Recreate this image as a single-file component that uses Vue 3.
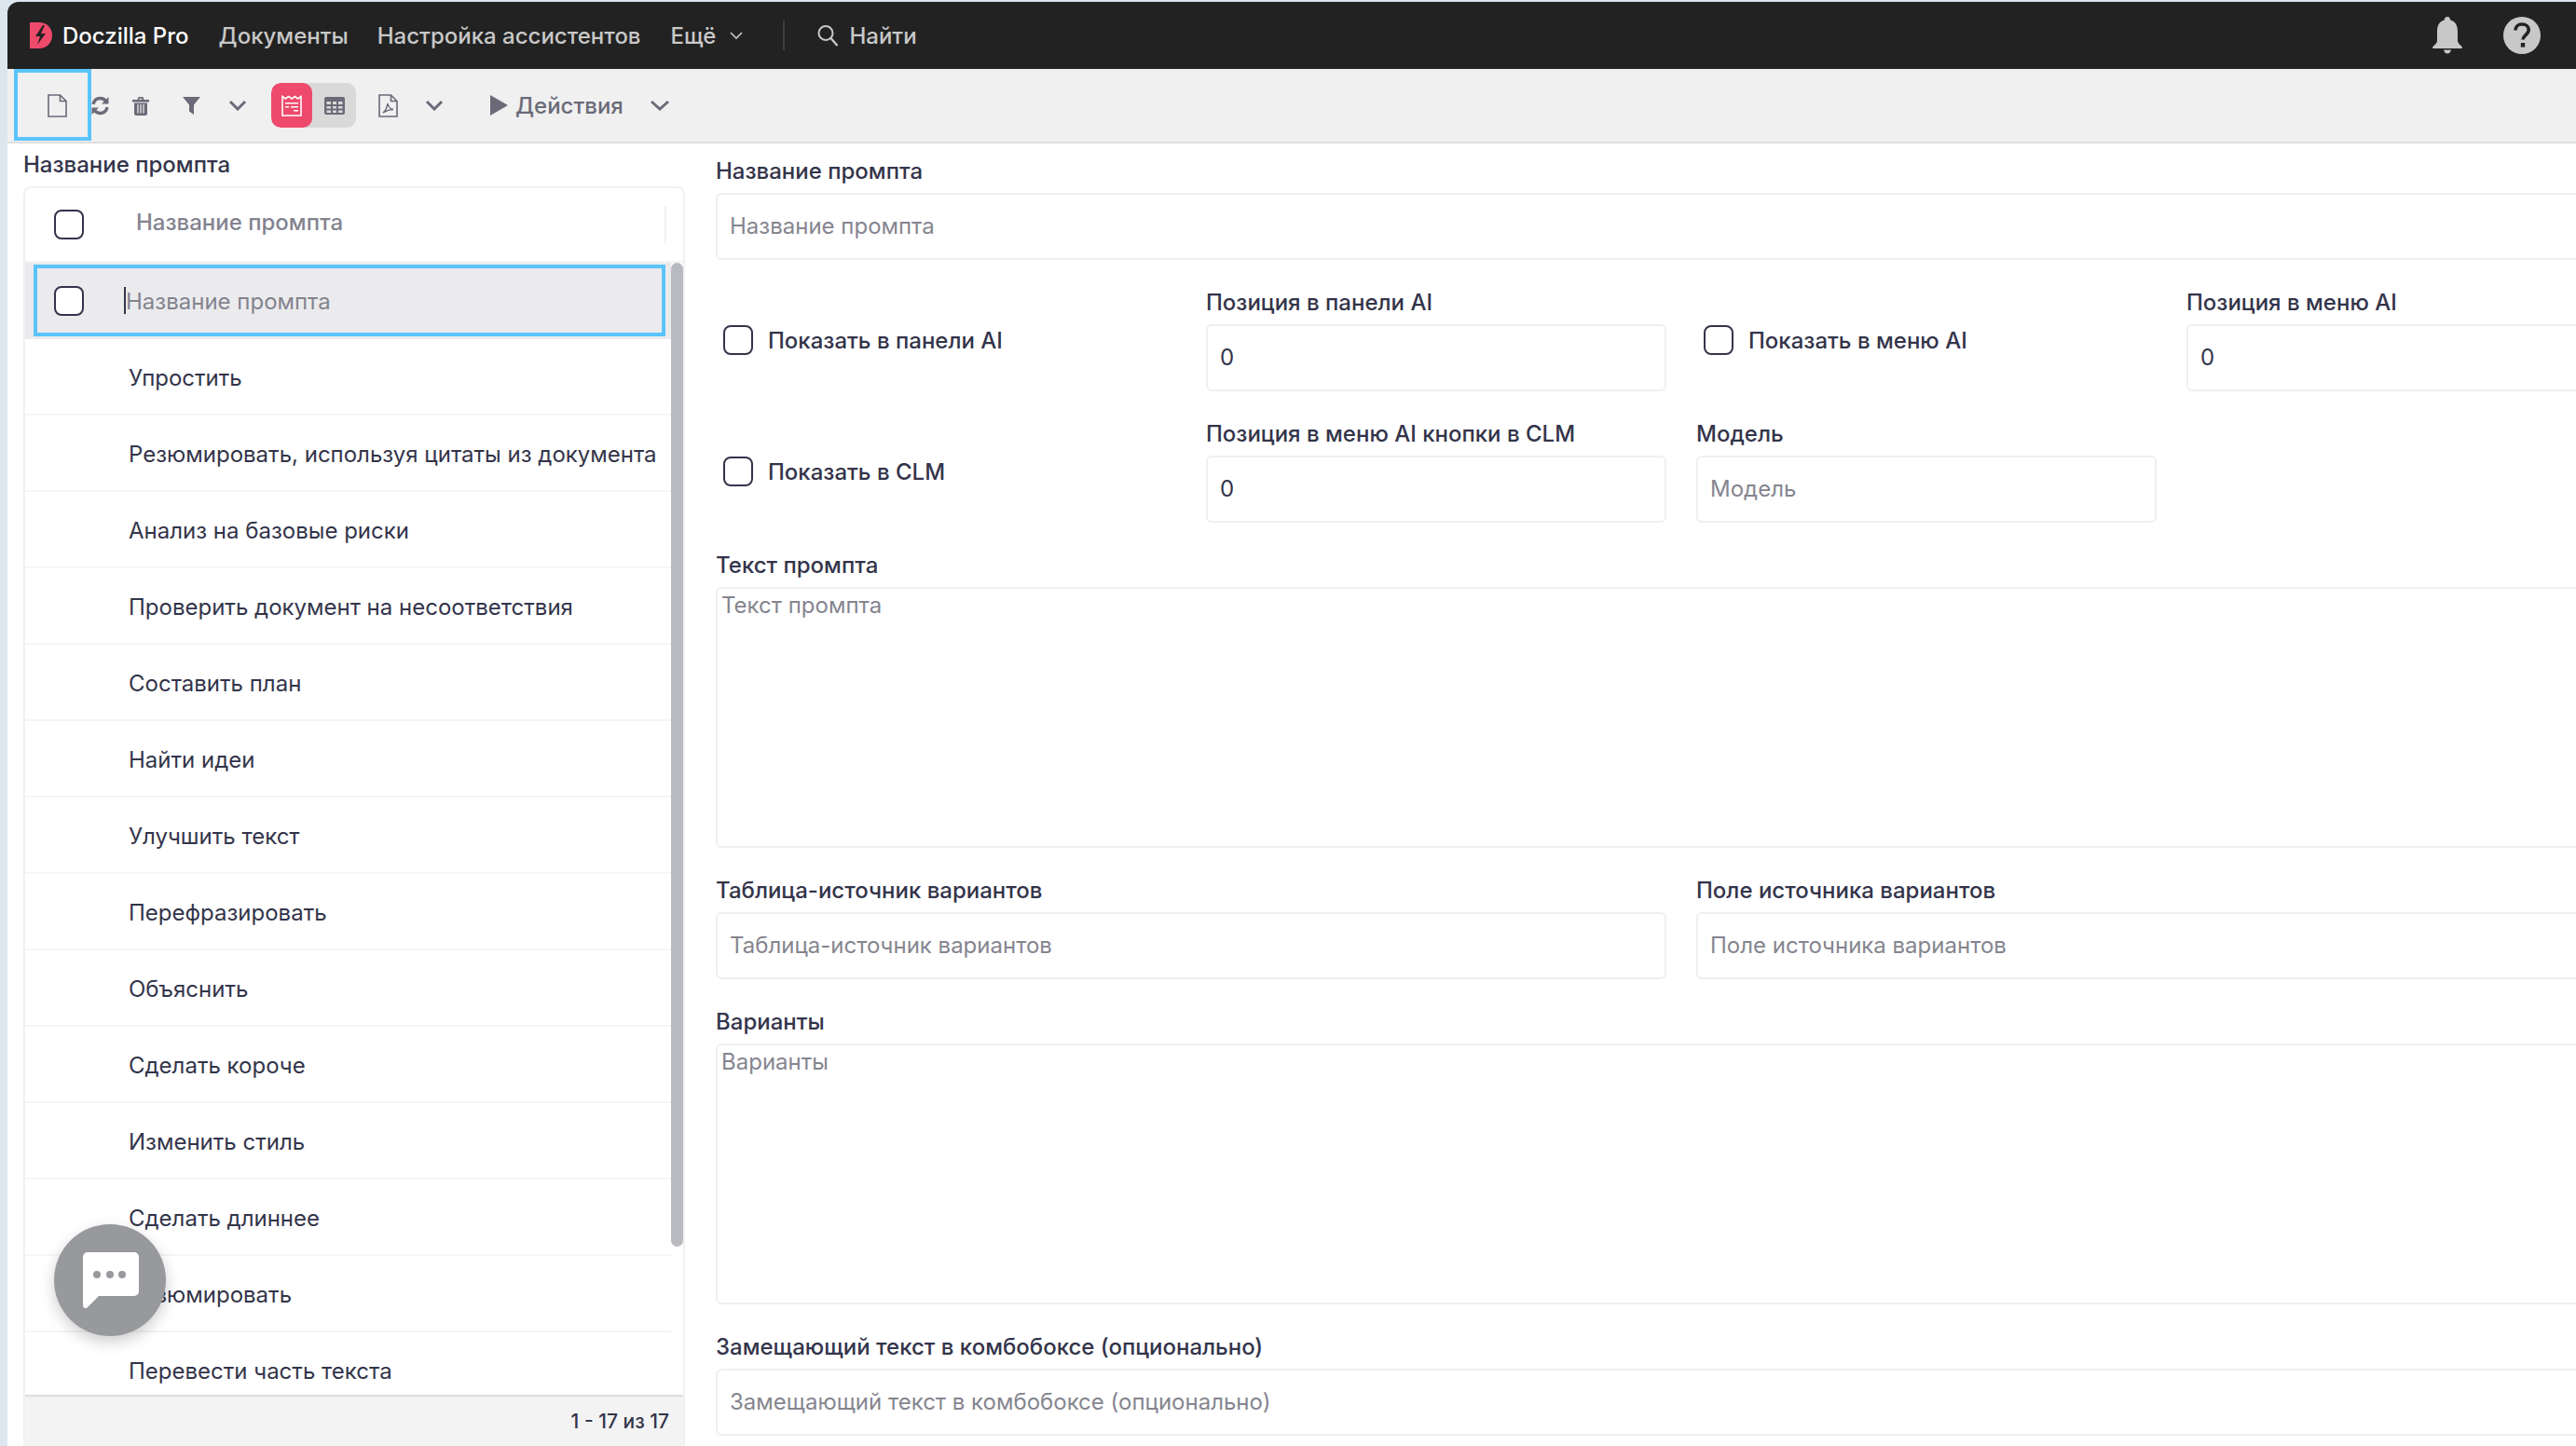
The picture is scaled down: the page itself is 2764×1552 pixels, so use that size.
<template>
  <div class="page">
    <header class="topbar">
      <svg class="logo" viewBox="0 0 24 28">
        <path d="M0 0h10c8 0 14 6 14 14s-6 14-14 14H0z" fill="#ee4a6c" />
        <path d="M14 3 6 15h5l-3 9 9-12h-5l4-9z" fill="#222" />
      </svg>
      <span class="brand">Doczilla Pro</span>
      <nav class="nav">
        <a>Документы</a>
        <a>Настройка ассистентов</a>
        <a class="more">
          Ещё
          <svg width="14" height="10" viewBox="0 0 14 10"><path d="M1 2l6 6 6-6" fill="none" stroke="#c8c8c8" stroke-width="1.6" /></svg>
        </a>
      </nav>
      <div class="divider"></div>
      <div class="search">
        <svg width="26" height="26" viewBox="0 0 26 26"><circle cx="11" cy="10.5" r="7.5" fill="none" stroke="#c8c8c8" stroke-width="2" /><path d="M16.5 16l7 8" stroke="#c8c8c8" stroke-width="2.4" /></svg>
        <span>Найти</span>
      </div>
      <div class="top-right">
        <svg class="bell" width="32" height="40" viewBox="0 0 32 40">
          <path d="M16 0c2 0 3.2 1.6 3.2 3.6C25 5.300 27 10 27 16v10c0 2 2.500 4 4.500 6 .8 1 .3 2-1 2H1.500c-1.300 0-1.800-1-1-2 2-2 4.500-4 4.500-6V16c0-6 2-10.700 7.800-12.400C12.800 1.600 14 0 16 0z" fill="#c8c8c8" />
          <path d="M12 35.500h8c-.6 2.500-2 4-4 4s-3.400-1.500-4-4z" fill="#c8c8c8" />
        </svg>
        <svg width="40" height="40" viewBox="0 0 40 40">
          <circle cx="20" cy="20" r="20" fill="#c8c8c8" />
          <path d="M13 14.500c0-4 3-6.500 7-6.500s7.200 2.400 7.200 6c0 5.500-6.200 5.500-6.200 10.500" fill="none" stroke="#222" stroke-width="3.600" />
          <rect x="18.800" y="28" width="4.400" height="4.600" fill="#222" />
        </svg>
      </div>
    </header>

    <div class="toolbar">
      <div class="focus-box">
        <svg width="21" height="25" viewBox="0 0 21 25"><path d="M1 1h12.500L20 7.500V24H1z M13.500 1v6.500H20" fill="none" stroke="#6a6a78" stroke-width="1.600" /></svg>
      </div>
      <svg class="t-refresh" width="19" height="21" viewBox="0 0 19 21">
        <path d="M2 9c.8-4 3.800-6.500 7.500-6.500 2.500 0 4.500 1.100 6 2.800" fill="none" stroke="#6a6a78" stroke-width="3.400" />
        <path d="M18.500 1v7.500H11z" fill="#6a6a78" />
        <path d="M17 12c-.8 4-3.800 6.500-7.500 6.500-2.500 0-4.500-1.100-6-2.800" fill="none" stroke="#6a6a78" stroke-width="3.400" />
        <path d="M.5 20v-7.500H8z" fill="#6a6a78" />
      </svg>
      <svg class="t-trash" width="18" height="21" viewBox="0 0 18 21">
        <path d="M0 4h18v2.500H0zM5.500 4l1-3h5l1 3h-2l-.5-1.300h-2.500L7.500 4z" fill="#6a6a78" />
        <path d="M2 7.500h14V19a2 2 0 0 1-2 2H4a2 2 0 0 1-2-2z" fill="#6a6a78" />
        <path d="M6 9v9.500M9 9v9.500M12 9v9.500" stroke="#f0f0f0" stroke-width="1.200" />
      </svg>
      <svg class="t-filter" width="19" height="19" viewBox="0 0 19 19"><path d="M0 0h19l-7 8.500V19l-5-3.500v-7z" fill="#6a6a78" /></svg>
      <svg class="t-chev" width="20" height="12" viewBox="0 0 20 12"><path d="M2 2l8 8 8-8" fill="none" stroke="#6a6a78" stroke-width="3" /></svg>
      <div class="segment">
        <div class="seg-on">
          <svg width="22" height="23" viewBox="0 0 22 23">
            <path d="M1 1.500l3.300 2.500 3.300-2.500L11 4l3.400-2.500L17.700 4 21 1.500V22H1z" fill="none" stroke="#fff" stroke-width="1.600" />
            <path d="M4 8h14v1.500H4zM4 12h4v1.500H4zM10 12h8v1.500h-8zM13 16h5v1.500h-5z" fill="#fff" />
          </svg>
        </div>
        <div class="seg-off">
          <svg width="22" height="19" viewBox="0 0 22 19"><path d="M2 0h18a2 2 0 0 1 2 2v15a2 2 0 0 1-2 2H2a2 2 0 0 1-2-2V2a2 2 0 0 1 2-2zm.5 5v3h4.500V5zm6.500 0v3h4V5zm6 0v3h4.500V5zM2.500 10v2.500h4.500V10zm6.500 0v2.500h4V10zm6 0v2.500h4.500V10zM2.500 14.500V17h4.500v-2.500zm6.500 0V17h4v-2.500zm6 0V17h4.500v-2.500z" fill="#6a6a78" fill-rule="evenodd" /></svg>
        </div>
      </div>
      <svg class="t-pdf" width="21" height="25" viewBox="0 0 21 25">
        <path d="M1 1h12.500L20 7.500V24H1z M13.500 1v6.500H20" fill="none" stroke="#6a6a78" stroke-width="1.600" />
        <path d="M5 20c2-1 4-5 5-10 .5 3 3 6 6 6.500-3 0-7 1-11 3.500z" fill="none" stroke="#6a6a78" stroke-width="1.400" />
      </svg>
      <svg class="t-chev2" width="20" height="12" viewBox="0 0 20 12"><path d="M2 2l8 8 8-8" fill="none" stroke="#6a6a78" stroke-width="3" /></svg>
      <svg class="t-play" width="19" height="22" viewBox="0 0 19 22"><path d="M0 0l19 11L0 22z" fill="#6a6a78" /></svg>
      <span class="actions">Действия</span>
      <svg class="t-chev3" width="22" height="12" viewBox="0 0 22 12"><path d="M2 2l9 8 9-8" fill="none" stroke="#6a6a78" stroke-width="3" /></svg>
    </div>

    <main class="main">
      <section class="list-pane">
        <div class="list-title">Название промпта</div>
        <div class="grid">
          <div class="grid-head">
            <span class="check"></span>
            <span class="head-text">Название промпта</span>
            <span class="head-sep"></span>
          </div>
          <div class="grid-body">
            <div class="rows">
              <div class="row selected">
                <div class="edit-box">
                  <span class="check"></span>
                  <span class="caret"></span>
                  <span class="edit-text">Название промпта</span>
                </div>
              </div>
              <div v-for="item in items" :key="item.id" class="row">{{ item.name }}</div>
            </div>
            <div class="scroll"><div class="thumb"></div></div>
          </div>
          <div class="grid-foot">1 - 17 из 17</div>
        </div>
        <div class="chat">
          <svg width="60" height="60" viewBox="0 0 60 60">
            <path d="M5 0h50a5 5 0 0 1 5 5v37a5 5 0 0 1-5 5H17L5 59c-2 2-5 1-5-2V5a5 5 0 0 1 5-5z" fill="#fff" />
            <circle cx="15" cy="24" r="4" fill="#98999c" />
            <circle cx="29" cy="24" r="4" fill="#98999c" />
            <circle cx="42" cy="24" r="4" fill="#98999c" />
          </svg>
        </div>
      </section>

      <section class="form">
        <div class="field span4">
          <label>Название промпта</label>
          <input class="input" placeholder="Название промпта" />
        </div>

        <div class="check-field"><span class="check"></span><span>Показать в панели AI</span></div>
        <div class="field">
          <label>Позиция в панели AI</label>
          <input class="input" value="0" />
        </div>
        <div class="check-field"><span class="check"></span><span>Показать в меню AI</span></div>
        <div class="field">
          <label>Позиция в меню AI</label>
          <input class="input" value="0" />
        </div>

        <div class="check-field"><span class="check"></span><span>Показать в CLM</span></div>
        <div class="field">
          <label>Позиция в меню AI кнопки в CLM</label>
          <input class="input" value="0" />
        </div>
        <div class="field span2">
          <label>Модель</label>
          <input class="input half" placeholder="Модель" />
        </div>

        <div class="field span4">
          <label>Текст промпта</label>
          <textarea class="area prompt" placeholder="Текст промпта"></textarea>
        </div>

        <div class="field span2">
          <label>Таблица-источник вариантов</label>
          <input class="input" placeholder="Таблица-источник вариантов" />
        </div>
        <div class="field span2">
          <label>Поле источника вариантов</label>
          <input class="input" placeholder="Поле источника вариантов" />
        </div>

        <div class="field span4">
          <label>Варианты</label>
          <textarea class="area variants" placeholder="Варианты"></textarea>
        </div>

        <div class="field span4">
          <label>Замещающий текст в комбобоксе (опционально)</label>
          <input class="input" placeholder="Замещающий текст в комбобоксе (опционально)" />
        </div>
      </section>
    </main>
  </div>
</template>

<script setup>
const names = [
  'Упростить',
  'Резюмировать, используя цитаты из документа',
  'Анализ на базовые риски',
  'Проверить документ на несоответствия',
  'Составить план',
  'Найти идеи',
  'Улучшить текст',
  'Перефразировать',
  'Объяснить',
  'Сделать короче',
  'Изменить стиль',
  'Сделать длиннее',
  'Резюмировать',
  'Перевести часть текста',
];

const items = names.map((name, id) => ({ id, name }));
</script>

<style>
html,
body {
  margin: 0;
  height: 100%;
  overflow: hidden;
  background: #dde5ee;
}
</style>

<style scoped>
* {
  box-sizing: border-box;
}

.page {
  width: 2764px;
  height: 1552px;
  padding: 2px 0 0 8px;
  display: flex;
  flex-direction: column;
  overflow: hidden;
  font-family: Inter, "Liberation Sans", sans-serif;
  font-size: 24px;
  color: #33344a;
  background: #dde5ee;
}

/* top bar */
.topbar {
  height: 72px;
  flex: none;
  display: flex;
  align-items: center;
  padding-left: 24px;
  background: #222;
  border-top-left-radius: 12px;
  color: #c8c8c8;
  font-weight: 500;
}

.logo {
  width: 24px;
  height: 28px;
}

.brand {
  margin-left: 11px;
  color: #fff;
}

.nav {
  display: flex;
  align-items: center;
  gap: 31px;
  margin-left: 32px;
}

.more {
  display: flex;
  align-items: center;
  gap: 15px;
  margin-left: 1px;
}

.divider {
  width: 2px;
  height: 32px;
  margin-left: 43px;
  background: #3d3d3d;
}

.search {
  display: flex;
  align-items: center;
  gap: 10px;
  margin-left: 33px;
}

.top-right {
  margin-left: auto;
  padding-right: 38px;
  display: flex;
  align-items: center;
  gap: 44px;
}

/* toolbar */
.toolbar {
  height: 80px;
  flex: none;
  display: flex;
  align-items: center;
  position: relative;
  background: #f0f0f0;
  border-bottom: 2px solid #dedede;
}

.focus-box {
  width: 83px;
  height: 77px;
  margin-left: 7px;
  align-self: flex-start;
  display: flex;
  align-items: center;
  justify-content: center;
  padding-left: 9px;
  padding-top: 2px;
  border: 4px solid #5ac4fb;
}

.t-refresh { margin-left: 0; }
.t-trash { margin-left: 25px; }
.t-filter { margin-left: 36px; }
.t-chev { margin-left: 30px; }
.t-pdf { margin-left: 24px; }
.t-chev2 { margin-left: 29px; }
.t-play { margin-left: 50px; }
.t-chev3 { margin-left: 28px; }

.segment {
  display: flex;
  height: 48px;
  width: 91px;
  margin-left: 26px;
  border-radius: 10px;
  overflow: hidden;
  background: #d9d9d9;
}

.seg-on {
  width: 44px;
  display: flex;
  align-items: center;
  justify-content: center;
  background: #ee4a6c;
  border-radius: 10px;
}

.seg-off {
  flex: 1;
  display: flex;
  align-items: center;
  justify-content: center;
}

.actions {
  margin-left: 8px;
  color: #6a6a78;
  font-weight: 500;
}

/* main */
.main {
  flex: 1;
  min-height: 0;
  display: flex;
  background: #fff;
}

.list-pane {
  width: 727px;
  flex: none;
  position: relative;
  padding: 8px 0 0 17px;
  display: flex;
  flex-direction: column;
}

.list-title {
  height: 30px;
  line-height: 30px;
  margin-bottom: 8px;
  font-weight: 500;
}

.grid {
  flex: 1;
  min-height: 0;
  display: flex;
  flex-direction: column;
  border: 2px solid #f1f1f1;
  border-bottom: none;
  border-radius: 8px 8px 0 0;
}

.grid-head {
  height: 80px;
  flex: none;
  display: flex;
  align-items: center;
  padding-left: 31px;
  border-bottom: 2px solid #f3f3f3;
}

.head-text {
  margin-left: 56px;
  color: #83838f;
  font-weight: 500;
  position: relative;
  top: -3px;
}

.head-sep {
  width: 2px;
  height: 40px;
  margin-left: auto;
  margin-right: 18px;
  background: #f1f1f1;
}

.grid-body {
  flex: 1;
  min-height: 0;
  display: flex;
  overflow: hidden;
}

.rows {
  flex: 1;
  min-width: 0;
}

.row {
  height: 82px;
  display: flex;
  align-items: center;
  padding-left: 111px;
  padding-top: 3px;
  border-bottom: 2px solid #f5f5f5;
}

.row.selected {
  padding: 2px 6px 3px 9px;
  background: #ebebed;
  border-bottom: none;
}

.edit-box {
  width: 100%;
  height: 77px;
  display: flex;
  align-items: center;
  padding-left: 18px;
  border: 4px solid #5ac4fb;
}

.caret {
  width: 2px;
  height: 29px;
  margin-left: 43px;
  background: #33344a;
}

.edit-text {
  color: #83838f;
  position: relative;
  top: 1px;
}

.scroll {
  width: 13px;
  flex: none;
}

.thumb {
  height: 1056px;
  border-radius: 7px;
  background: #b9b9c0;
}

.grid-foot {
  height: 55px;
  flex: none;
  display: flex;
  align-items: center;
  justify-content: flex-end;
  padding-right: 15px;
  font-size: 21px;
  font-weight: 500;
  background: #f3f3f3;
  border-top: 2px solid #dedede;
}

.check {
  width: 32px;
  height: 32px;
  flex: none;
  border: 2px solid #33344a;
  border-radius: 8px;
  background: #fff;
}

.chat {
  position: absolute;
  left: 50px;
  top: 1160px;
  width: 120px;
  height: 120px;
  display: flex;
  align-items: center;
  justify-content: center;
  padding-left: 1px;
  border-radius: 50%;
  background: #98999c;
  box-shadow: 0 6px 16px rgba(0, 0, 0, 0.2);
}

/* form */
.form {
  width: 2072px;
  flex: none;
  margin-left: 33px;
  padding-top: 15px;
  display: grid;
  grid-template-columns: repeat(4, 494px);
  column-gap: 32px;
  row-gap: 31px;
  align-content: start;
}

.span2 { grid-column: span 2; }
.span4 { grid-column: span 4; }

.field {
  display: flex;
  flex-direction: column;
  gap: 8px;
}

.field label {
  height: 30px;
  line-height: 30px;
  font-weight: 500;
}

.input,
.area {
  width: 100%;
  display: block;
  border: 2px solid #efefef;
  border-radius: 6px;
  outline: none;
  background: #fff;
  font: inherit;
  color: #33344a;
}

.input {
  height: 72px;
  padding: 0 13px 2px;
}

.input.half {
  width: 494px;
}

.area {
  padding: 3px 4px;
  resize: none;
}

.prompt { height: 280px; }
.variants { height: 280px; }

.input::placeholder,
.area::placeholder {
  color: #85858f;
  opacity: 1;
}

.check-field {
  display: flex;
  align-items: center;
  gap: 16px;
  padding-left: 8px;
  font-weight: 500;
}
</style>
